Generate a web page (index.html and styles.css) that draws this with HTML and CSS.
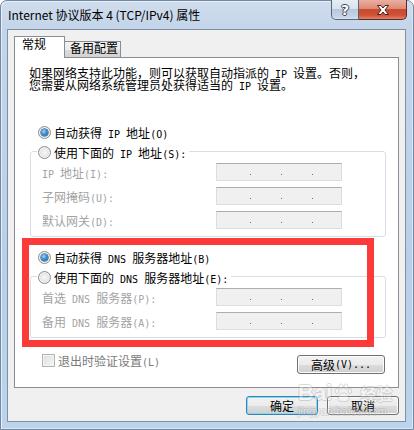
FILE: index.html
```html
<!DOCTYPE html>
<html lang="zh-CN">
<head>
<meta charset="utf-8">
<title>Internet 协议版本 4 (TCP/IPv4) 属性</title>
<link rel="stylesheet" href="styles.css">
</head>
<body>
<div class="window">
  <div class="titlebar">
    <div class="title">Internet 协议版本 4 (TCP/IPv4) 属性</div>
    <div class="controls">
      <div class="cbtn help">?</div>
      <div class="cbtn close">
        <svg width="16" height="12" viewBox="0 0 16 12"><path d="M2.5 1.5 L6 1.5 L8 4 L10 1.5 L13.5 1.5 L10 6 L13.5 10.5 L10 10.5 L8 8 L6 10.5 L2.5 10.5 L6 6 Z" fill="#fff" stroke="#4a2019" stroke-width="1" stroke-linejoin="round"/></svg>
      </div>
    </div>
  </div>
  <div class="client">
    <div class="tabs">
      <div class="tab active">常规</div>
      <div class="tab">备用配置</div>
    </div>
    <div class="panel">
      <div class="desc">
        <div class="desc-line">如果网络支持此功能，则可以获取自动指派的<span class="en"> IP </span>设置。否则，</div>
        <div class="desc-line">您需要从网络系统管理员处获得适当的<span class="en"> IP </span>设置。</div>
      </div>

      <div class="opt ip-auto"><span class="radio on"></span><span>自动获得<span class="en"> IP </span>地址<span class="en">(O)</span></span></div>
      <div class="group">
        <div class="legend"><span class="radio"></span><span>使用下面的<span class="en"> IP </span>地址<span class="en">(S):</span></span></div>
        <div class="fields">
          <div class="field"><span class="label"><span class="en">IP </span>地址<span class="en">(I):</span></span><span class="ip"><i></i><i></i><i></i></span></div>
          <div class="field"><span class="label">子网掩码<span class="en">(U):</span></span><span class="ip"><i></i><i></i><i></i></span></div>
          <div class="field"><span class="label">默认网关<span class="en">(D):</span></span><span class="ip"><i></i><i></i><i></i></span></div>
        </div>
      </div>

      <div class="opt dns-auto"><span class="radio on"></span><span>自动获得<span class="en"> DNS </span>服务器地址<span class="en">(B)</span></span></div>
      <div class="group">
        <div class="legend"><span class="radio"></span><span>使用下面的<span class="en"> DNS </span>服务器地址<span class="en">(E):</span></span></div>
        <div class="fields">
          <div class="field"><span class="label">首选<span class="en"> DNS </span>服务器<span class="en">(P):</span></span><span class="ip"><i></i><i></i><i></i></span></div>
          <div class="field"><span class="label">备用<span class="en"> DNS </span>服务器<span class="en">(A):</span></span><span class="ip"><i></i><i></i><i></i></span></div>
        </div>
      </div>

      <div class="bottom-row">
        <div class="check"><span class="box"></span><span>退出时验证设置<span class="en">(L)</span></span></div>
        <div class="btn adv">高级<span class="en">(V)...</span></div>
      </div>

      <div class="highlight"></div>
    </div>
    <div class="actions">
      <div class="btn default">确定</div>
      <div class="btn">取消</div>
    </div>
  </div>
  <div class="watermark">
    <div class="wm-logo"><span class="wm-bai">Bai</span><svg class="wm-paw" width="18" height="20" viewBox="0 0 18 20"><ellipse cx="3" cy="8" rx="2" ry="2.6"/><ellipse cx="7" cy="3.5" rx="2" ry="2.6"/><ellipse cx="12" cy="3.5" rx="2" ry="2.6"/><ellipse cx="16" cy="8" rx="1.8" ry="2.6"/><path d="M4 17 C4 12 7 10 9.5 10 C12 10 15 12 15 17 C15 19 4 19 4 17 Z"/></svg><span class="wm-jy">经验</span></div>
    <div class="wm-url">jingyan.baidu.com</div>
  </div>
</div>
</body>
</html>
```

FILE: styles.css
```css
* { box-sizing: border-box; }
html, body { margin: 0; padding: 0; }
body {
  width: 414px;
  height: 430px;
  overflow: hidden;
  background: #ffffff;
  font-family: "Noto Sans CJK SC", "Noto Sans", sans-serif;
  font-size: 12px;
  color: #000;
}
.en {
  font-family: "DejaVu Sans Mono", "Liberation Mono", monospace;
  font-size: 10px;
  white-space: pre;
}

/* window frame */
.window {
  position: relative;
  width: 414px;
  height: 430px;
  display: flex;
  flex-direction: column;
  padding: 0 7px 7px 6px;
  border: 1px solid #6f88a6;
  border-radius: 7px 7px 0 0;
  background: linear-gradient(180deg, #cfdcec 0, #c4d5ea 28px, #b9cfe9 60%, #bcd3ec 100%);
  box-shadow: inset 1px 1px 0 #e6eef8, inset -1px -1px 0 #dbe7f5;
}
.titlebar {
  height: 28px;
  display: flex;
  align-items: flex-start;
}
.title {
  padding: 6px 0 0 1px;
  font-size: 12px;
  line-height: 16px;
  color: #000;
  white-space: nowrap;
}
.controls {
  margin-left: auto;
  margin-top: -1px;
  margin-right: -1px;
  display: flex;
}
.cbtn {
  height: 20px;
  display: flex;
  align-items: center;
  justify-content: center;
  border: 1px solid #56677c;
  border-top: none;
}
.help {
  width: 28px;
  border-radius: 0 0 0 5px;
  background: linear-gradient(180deg, #e6edf5 0, #d8e2ee 45%, #b9c9dc 50%, #c4d3e4 85%, #d6e2ef 100%);
  color: #fff;
  font-family: "DejaVu Sans", sans-serif;
  font-weight: bold;
  font-size: 14px;
  line-height: 14px;
  text-shadow: 1px 0 0 #3d4653, -1px 0 0 #3d4653, 0 1px 0 #3d4653, 0 -1px 0 #3d4653;
}
.close {
  width: 48px;
  border-left: none;
  border-color: #5b2a22;
  border-radius: 0 0 5px 0;
  background: linear-gradient(180deg, #eab0a2 0, #dd8b75 45%, #c94a2e 50%, #cf5337 80%, #e0846a 100%);
}

/* client area */
.client {
  flex: 1;
  display: flex;
  flex-direction: column;
  background: #f0f0f0;
  border: 1px solid #7f90a4;
  padding: 6px 6px 6px 6px;
}
.tabs {
  display: flex;
  align-items: flex-end;
  height: 22px;
  margin-bottom: -1px;
  position: relative;
  z-index: 1;
}
.tab {
  height: 16px;
  width: 56px;
  margin-bottom: 1px;
  padding: 0 0 0 5px;
  border: 1px solid #898c95;
  border-bottom: none;
  border-left: none;
  background: linear-gradient(180deg, #f3f3f3 0, #ebebeb 50%, #dddddd 51%, #d2d2d2 100%);
  line-height: 12px;
  white-space: nowrap;
}
.tab.active {
  height: 22px;
  width: 51px;
  margin-bottom: 0;
  padding-left: 7px;
  border-left: 1px solid #898c95;
  background: #ffffff;
  line-height: 13px;
}

.panel {
  position: relative;
  flex: 1;
  display: flex;
  flex-direction: column;
  background: #ffffff;
  border: 1px solid #898c95;
  padding: 9px 12px 0 15px;
}
.desc {
  margin: 0 0 0 -1px;
  display: flex;
  flex-direction: column;
  white-space: nowrap;
}
.desc-line {
  height: 12px;
  line-height: 12px;
}
.opt {
  display: flex;
  align-items: center;
  gap: 3px;
  height: 16px;
  padding-left: 8px;
  white-space: nowrap;
}
.ip-auto { margin-top: 33px; }
.dns-auto { margin-top: 12px; }

.radio {
  position: relative;
  flex: none;
  width: 13px;
  height: 13px;
  border-radius: 50%;
  border: 1px solid #8b8d8f;
  background: radial-gradient(circle at 50% 50%, #f7f7f7 0, #e9e9e9 45%, #cfcfcf 100%);
  box-shadow: inset 0 0 0 1px #f4f4f4;
}
.radio.on::after {
  content: "";
  position: absolute;
  left: 2px;
  top: 2px;
  width: 7px;
  height: 7px;
  border-radius: 50%;
  background: radial-gradient(circle at 40% 35%, #9ad8ff 0, #3c8fd4 45%, #1d5687 100%);
  box-shadow: 0 0 0 0.5px #1a3f66;
}

.group {
  margin-top: 11px;
  display: flex;
  flex-direction: column;
  border: 1px solid #d5dfe5;
  border-radius: 3px;
  padding: 0 0 7px 0;
}
.legend {
  align-self: flex-start;
  display: flex;
  align-items: center;
  gap: 3px;
  height: 16px;
  margin: -8px 0 0 6px;
  padding: 0 3px 0 1px;
  background: #ffffff;
  white-space: nowrap;
}
.fields {
  display: flex;
  flex-direction: column;
  gap: 6px;
  margin-top: 3px;
  padding-left: 11px;
}
.field {
  display: flex;
  align-items: center;
  height: 18px;
}
.label {
  width: 174px;
  color: #a3a3a3;
  white-space: nowrap;
}
.ip {
  display: flex;
  align-items: flex-end;
  gap: 30px;
  width: 126px;
  height: 18px;
  padding: 0 0 5px 33px;
  background: #f0f0f0;
  border: 1px solid #dadde3;
  border-top-color: #abadb3;
}
.ip i {
  display: block;
  width: 1px;
  height: 1px;
  background: #6d6d6d;
}

.bottom-row {
  margin-top: 16px;
  display: flex;
  justify-content: space-between;
  align-items: flex-start;
}
.check {
  display: flex;
  align-items: center;
  gap: 3px;
  height: 13px;
  margin-left: 12px;
  color: #7a7a7a;
  white-space: nowrap;
}
.box {
  width: 13px;
  height: 13px;
  border: 1px solid #b3b3b3;
  background: linear-gradient(135deg, #dedede 0, #f6f6f6 100%);
  box-shadow: inset 0 0 0 1px #f4f4f4;
}

.btn {
  display: flex;
  align-items: center;
  justify-content: center;
  height: 19px;
  width: 72px;
  border: 1px solid #707070;
  border-radius: 3px;
  background: linear-gradient(180deg, #f2f2f2 0, #ebebeb 50%, #dddddd 51%, #cfcfcf 100%);
  box-shadow: inset 0 0 0 1px #fbfbfb;
  line-height: 12px;
  white-space: nowrap;
}
.btn.adv {
  width: 88px;
  margin-top: 1px;
  margin-right: 1px;
}
.btn.default {
  border-color: #3c7fb1;
  box-shadow: inset 0 0 0 1px #7fdcf7;
}
.actions {
  display: flex;
  justify-content: flex-end;
  gap: 9px;
  margin-top: 8px;
}

/* annotation */
.highlight {
  position: absolute;
  left: 7px;
  top: 180px;
  width: 352px;
  height: 109px;
  border: 7px solid #fd3a3a;
}

/* watermark */
.watermark {
  position: absolute;
  left: 297px;
  top: 380px;
  opacity: 0.3;
  pointer-events: none;
}
.wm-logo {
  display: flex;
  align-items: center;
  gap: 2px;
  height: 24px;
  color: #ffffff;
  font-family: "Liberation Sans", sans-serif;
  font-weight: bold;
  text-shadow: 1px 0 0 #8a8a8a, -1px 0 0 #8a8a8a, 0 1px 0 #8a8a8a, 0 -1px 0 #8a8a8a;
}
.wm-bai { font-size: 22px; line-height: 24px; }
.wm-paw { fill: #ffffff; stroke: #8a8a8a; stroke-width: 1; }
.wm-jy {
  margin-left: 6px;
  font-family: "Noto Sans CJK SC", sans-serif;
  font-size: 16px;
  line-height: 24px;
}
.wm-url {
  font-family: "Liberation Sans", sans-serif;
  font-size: 11px;
  line-height: 13px;
  color: #ffffff;
  text-shadow: 1px 0 0 #8a8a8a, -1px 0 0 #8a8a8a, 0 1px 0 #8a8a8a, 0 -1px 0 #8a8a8a;
}
```
